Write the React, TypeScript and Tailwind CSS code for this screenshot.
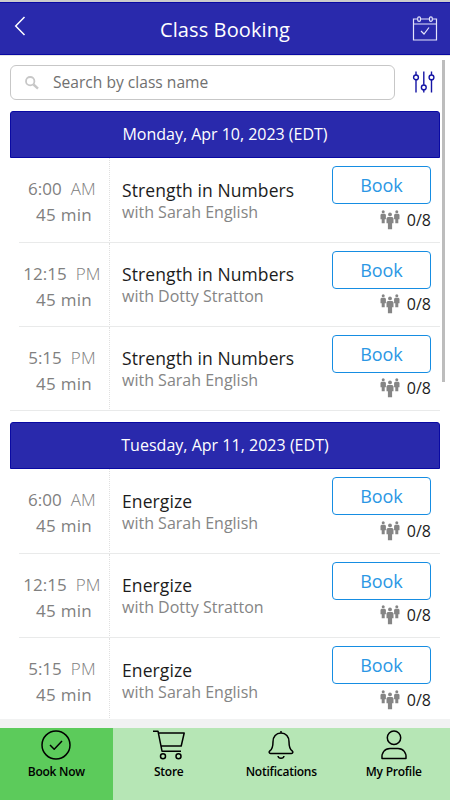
type ClassItem = { time: string; period: string; name: string; coach: string };
type Day = { date: string; spacing: string; items: ClassItem[] };

const slots = [
  { time: "6:00", period: "AM", coach: "Sarah English" },
  { time: "12:15", period: "PM", coach: "Dotty Stratton" },
  { time: "5:15", period: "PM", coach: "Sarah English" },
];

const days: Day[] = [
  { date: "Monday, Apr 10, 2023 (EDT)", spacing: "tracking-[-0.02px]", items: slots.map((s) => ({ ...s, name: "Strength in Numbers" })) },
  { date: "Tuesday, Apr 11, 2023 (EDT)", spacing: "tracking-[0.02px]", items: slots.map((s) => ({ ...s, name: "Energize" })) },
];

function PersonShape({ x, y }: { x: number; y: number }) {
  return (
    <g transform={`translate(${x} ${y})`}>
      <circle cx="3" cy="1.5" r="1.5" />
      <path d="M1.3 3.5h3.4l1 1V9H4.5v4h-3V9H.3V4.5z" />
    </g>
  );
}

function PeopleIcon() {
  return (
    <svg className="h-5 w-5" viewBox="0 0 20 20" fill="#858585">
      <PersonShape x={0.2} y={0.3} />
      <PersonShape x={13.8} y={0.3} />
      <g transform="translate(6.5 2.3)">
        <circle cx="3.5" cy="2.1" r="1.9" />
        <path d="M1.2 4.7h4.6L7 5.9V11H5.6v6H1.4v-6H0V5.9z" />
      </g>
    </svg>
  );
}

function ClassRow({ item, last }: { item: ClassItem; last: boolean }) {
  return (
    <div className={`relative flex h-[84.3px] shrink-0 ${last ? "" : "ml-[9px]"}`}>
      <div className={`flex shrink-0 flex-col items-center border-r border-dotted border-[#e0e0e0] pt-[18px] text-[17px] leading-[26px] text-[#808080] ${last ? "w-[100px] pl-[5px]" : "w-[91px] pr-1"}`}>
        <div className="whitespace-nowrap">
          {item.time}<span className="ml-[9px] font-light tracking-[0.2px]">{item.period}</span>
        </div>
        <div className="pl-1 tracking-[0.3px]">45 min</div>
      </div>
      <div className="min-w-0 flex-1 pl-3 pt-[19.5px]">
        <div className="whitespace-nowrap text-[17.5px] leading-6 tracking-[0.1px] text-[#1c1c1c]">{item.name}</div>
        <div className="-mt-px whitespace-nowrap text-[16px] leading-[22px] text-[#858585]">with {item.coach}</div>
      </div>
      <div className="mr-[9px] flex w-[99px] flex-col items-end pt-2">
        <button className="h-[38px] w-full rounded-[4px] border border-[#168de2] text-[18px] leading-6 tracking-[-0.1px] text-[#2b97e4]">Book</button>
        <div className="mt-[5.5px] flex h-5 items-center gap-[6.5px] text-[16px] leading-5 text-[#1c1c1c]">
          <PeopleIcon />
          <span>0/8</span>
        </div>
      </div>
      <div className="absolute inset-x-0 bottom-0 h-px bg-[#e9eaea]" />
    </div>
  );
}

const tabs = [
  {
    label: "Book Now",
    icon: (
      <>
        <circle cx="16" cy="17" r="14" />
        <path d="m10 17 4.2 4.2L22 13" />
      </>
    ),
  },
  {
    label: "Store",
    icon: (
      <>
        <path d="M0 3.2h5l4 20h19M5.2 5h26l-3 13H8" />
        <circle cx="10" cy="28.3" r="2.5" />
        <circle cx="25.5" cy="28.3" r="2.5" />
      </>
    ),
  },
  {
    label: "Notifications",
    icon: (
      <>
        <path d="M16 3v2M16 5c-5 0-8 3.7-8 8.7 0 6.3-1.2 8-3.3 9.3-1 .8-.6 2.5.8 2.5h21c1.4 0 1.8-1.7.8-2.5-2.1-1.3-3.3-3-3.3-9.3 0-5-3-8.7-8-8.7zM13 28c.5 3 5.5 3 6 0" />
      </>
    ),
  },
  {
    label: "My Profile",
    icon: (
      <>
        <circle cx="16" cy="9.8" r="6.7" />
        <path d="M4 30.5c-.7-5.7 2.7-10 8-10h8c5.3 0 8.7 4.3 8 10z" />
      </>
    ),
  },
];

export default function App() {
  return (
    <div className="flex h-[800px] w-[450px] flex-col overflow-hidden bg-white font-['Open_Sans',sans-serif]">
      <header className="grid h-[56px] shrink-0 grid-cols-[60px_1fr_60px] items-center border-b border-t-2 border-b-[#e4e4e4] border-t-[#ccc] bg-[#2929ac] shadow-[inset_0_1px_0_#0909a3,inset_0_-1px_0_#0909a3]">
        <svg className="mb-[5px] ml-[14px] h-5 w-3" viewBox="0 0 12 20" fill="none" stroke="white" strokeWidth="1.5">
          <path d="M10.5 1 1.7 10l8.8 9" />
        </svg>
        <h1 className="pt-[2px] text-center text-[20px] leading-7 tracking-[0.1px] text-white">Class Booking</h1>
        <svg className="mb-[2px] ml-[22px] h-[26px] w-[26px]" viewBox="0 0 26 26" fill="none" stroke="#e4e4fb" strokeWidth="1.2">
          <path d="M5 4H1.5v21h23V4H21M9 4h8M2 9h22" />
          <rect x="5.7" y="1.8" width="2.8" height="4.5" rx="1.4" />
          <rect x="17.5" y="1.8" width="2.8" height="4.5" rx="1.4" />
          <path d="m9 16 3 3 5-6.5" />
        </svg>
      </header>

      <div className="flex min-h-0 flex-1">
        <main className="flex w-[440px] shrink-0 flex-col overflow-hidden pl-[10px] pt-[9px]">
          <div className="flex h-[35px] shrink-0 items-center">
            <div className="flex h-[35px] w-[385px] items-center rounded-[6px] border border-[#c7c7c7] pl-[14px] text-[15.6px] text-[#707070]">
              <svg className="mr-[14px] h-[14px] w-[14px]" viewBox="0 0 14 14" fill="none" stroke="#c7c7c7">
                <circle cx="5.2" cy="5.2" r="4.2" strokeWidth="1.8" />
                <path d="m8.5 8.5 4.5 4.2" strokeWidth="2.4" />
              </svg>
              <span className="whitespace-nowrap pt-px">Search by class name</span>
            </div>
            <svg className="mb-[2px] ml-[17px] h-[22px] w-[24px]" viewBox="0 0 24 22" fill="none" stroke="#1515a5" strokeWidth="1.4">
              <path d="M4 .5V4M4 9v12.5M11.8.5v13.2M11.8 18.7v2.8M19.5.5V4M19.5 9v12.5" />
              <circle cx="4" cy="6.4" r="2.4" />
              <circle cx="11.8" cy="16.4" r="2.4" />
              <circle cx="19.5" cy="6.4" r="2.4" />
            </svg>
          </div>
          {days.map((day) => (
            <section key={day.date} className="mt-[10.8px] shrink-0">
              <h2 className={`flex h-[47.5px] items-center justify-center rounded-t-[3px] border border-[#0909a3] bg-[#2929ac] pb-px text-[16px] text-white ${day.spacing}`}>{day.date}</h2>
              {day.items.map((item, i) => (
                <ClassRow key={item.time} item={item} last={i === day.items.length - 1} />
              ))}
            </section>
          ))}
        </main>
        <div className="ml-[2px] mt-1 h-[322px] w-[3px] bg-[#bdbdbd]" />
      </div>

      <footer className="shrink-0 border-t-[9px] border-[#f1f2f2]">
        <nav className="grid h-[72px] grid-cols-4 bg-[#b6e6b5]">
          {tabs.map((tab, i) => (
            <div key={tab.label} className={`flex flex-col items-center ${i === 0 ? "bg-[#5ccb5b]" : ""}`}>
              <svg className="h-8 w-8 overflow-visible" viewBox="0 0 32 32" fill="none" stroke="black" strokeWidth="1.5" strokeLinejoin="round">
                {tab.icon}
              </svg>
              <span className="mt-[3px] whitespace-nowrap text-[12px] font-semibold leading-[18px] tracking-[-0.25px] text-black">{tab.label}</span>
            </div>
          ))}
        </nav>
      </footer>
    </div>
  );
}
